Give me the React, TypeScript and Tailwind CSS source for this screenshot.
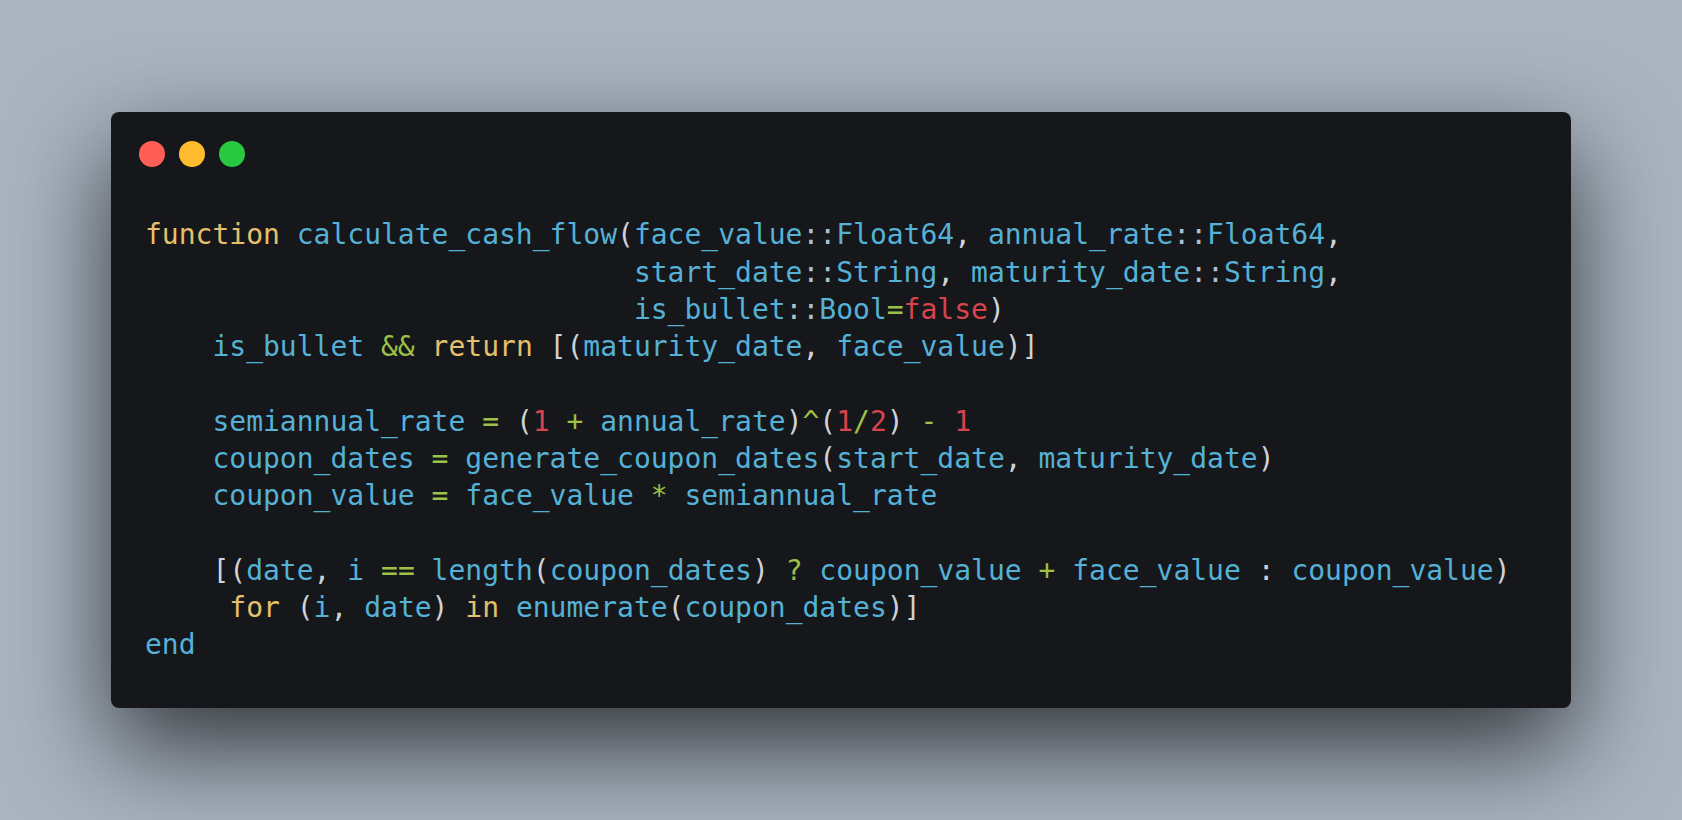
const Y = 'text-[#e5c06c]' // keywords
const B = 'text-[#55b1d5]' // identifiers
const R = 'text-[#d8434e]' // numbers, literals
const G = 'text-[#9cc146]' // operators
const W = 'text-[#cfd2d6]' // punctuation
const C = 'text-[#aac3d2]' // ::

type Tok = [string, string]

const indent = ' '.repeat(29)

const lines: Tok[][] = [
  [
    ['function', Y], [' ', W], ['calculate_cash_flow', B], ['(', W], ['face_value', B], ['::', C], ['Float64', B],
    [', ', W], ['annual_rate', B], ['::', C], ['Float64', B], [',', W],
  ],
  [
    [indent, W], ['start_date', B], ['::', C], ['String', B], [', ', W],
    ['maturity_date', B], ['::', C], ['String', B], [',', W],
  ],
  [
    [indent, W], ['is_bullet', B], ['::', C], ['Bool', B], ['=', G], ['false', R], [')', W],
  ],
  [
    ['    ', W], ['is_bullet', B], [' ', W], ['&&', G], [' ', W], ['return', Y], [' [(', W], ['maturity_date', B],
    [', ', W], ['face_value', B], [')]', W],
  ],
  [],
  [
    ['    ', W], ['semiannual_rate', B], [' ', W], ['=', G], [' (', W], ['1', R], [' ', W], ['+', G], [' ', W],
    ['annual_rate', B], [')', W], ['^', G], ['(', W], ['1', R], ['/', G], ['2', R], [') ', W], ['-', G], [' ', W], ['1', R],
  ],
  [
    ['    ', W], ['coupon_dates', B], [' ', W], ['=', G], [' ', W], ['generate_coupon_dates', B], ['(', W],
    ['start_date', B], [', ', W], ['maturity_date', B], [')', W],
  ],
  [
    ['    ', W], ['coupon_value', B], [' ', W], ['=', G], [' ', W], ['face_value', B], [' ', W], ['*', G], [' ', W],
    ['semiannual_rate', B],
  ],
  [],
  [
    ['    [(', W], ['date', B], [', ', W], ['i', B], [' ', W], ['==', G], [' ', W], ['length', B], ['(', W],
    ['coupon_dates', B], [') ', W], ['?', G], [' ', W], ['coupon_value', B], [' ', W], ['+', G], [' ', W],
    ['face_value', B], [' ', W], [':', W], [' ', W], ['coupon_value', B], [')', W],
  ],
  [
    ['     ', W], ['for', Y], [' (', W], ['i', B], [', ', W], ['date', B], [') ', W], ['in', Y], [' ', W],
    ['enumerate', B], ['(', W], ['coupon_dates', B], [')]', W],
  ],
  [['end', B]],
]

export default function App() {
  return (
    <div className="flex h-screen w-full items-center justify-center bg-[#a9b4c0]">
      <div className="w-[1460px] rounded-lg bg-[#16171a] pt-[29px] pb-[44px] shadow-[0_40px_100px_rgba(0,0,0,0.7)]">
        <div className="flex gap-[14px] pl-[28px]">
          <span className="h-[26px] w-[26px] rounded-full bg-[#ff5f57]" />
          <span className="h-[26px] w-[26px] rounded-full bg-[#febc2e]" />
          <span className="h-[26px] w-[26px] rounded-full bg-[#28c840]" />
        </div>
        <pre className="mt-[49px] pl-[34px] font-['DejaVu_Sans_Mono',monospace] text-[28px] leading-[37.3px]">
          {lines.map((line, i) => (
            <div key={i} className="h-[37.3px] whitespace-pre">
              {line.map(([text, cls], j) => (
                <span key={j} className={cls}>{text}</span>
              ))}
            </div>
          ))}
        </pre>
      </div>
    </div>
  )
}
